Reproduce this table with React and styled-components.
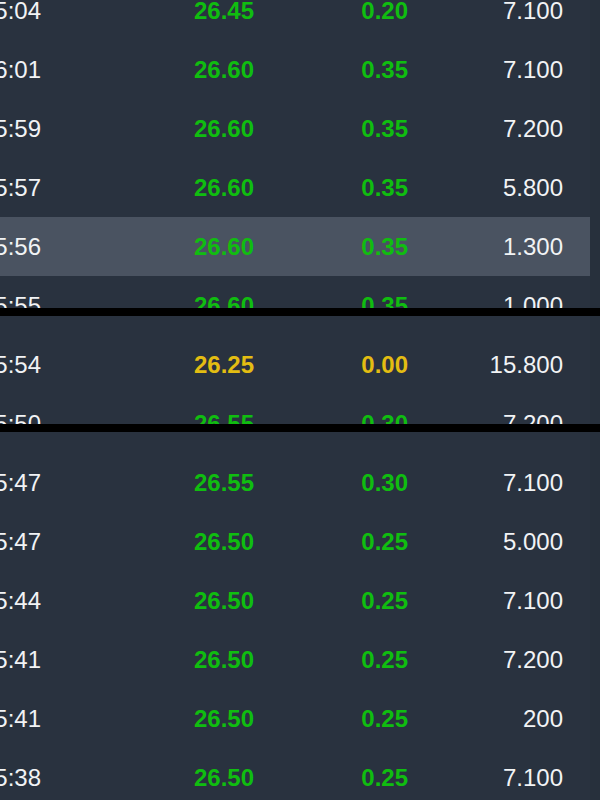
import styled, { createGlobalStyle } from "styled-components";

const GlobalStyle = createGlobalStyle`
  html, body {
    margin: 0;
    padding: 0;
    background: #000;
    overflow: hidden;
  }
  body {
    font-family: "Liberation Sans", Arial, sans-serif;
  }
`;

const Page = styled.div`
  width: 600px;
  height: 800px;
  display: flex;
  flex-direction: column;
  gap: 8px;
  background: #000;
  overflow: hidden;
`;

const Viewport = styled.div`
  height: ${p => p.$height}px;
  flex: none;
  overflow: hidden;
  background: #27303c;
`;

const List = styled.div`
  margin-top: ${p => p.$offset}px;
  width: 590px;
`;

const Row = styled.div`
  height: 59px;
  display: grid;
  grid-template-columns: 41px 213px 154px 155px 1fr;
  align-items: center;
  background: ${p => (p.$active ? "#4a5361" : "#29323f")};
  font-size: 24px;
`;

const Cell = styled.div`
  display: flex;
  justify-content: flex-end;
  white-space: nowrap;
  color: ${p => p.$color || "#f1f3f5"};
  font-weight: ${p => (p.$bold ? 700 : 400)};
`;

const colors = {
  up: "#10bd10",
  flat: "#e3bd12",
};

const segments = [
  {
    height: 308,
    offset: -19,
    rows: [
      ["13:25:04", "26.45", "0.20", "7.100", "up"],
      ["13:26:01", "26.60", "0.35", "7.100", "up"],
      ["13:25:59", "26.60", "0.35", "7.200", "up"],
      ["13:25:57", "26.60", "0.35", "5.800", "up"],
      ["13:25:56", "26.60", "0.35", "1.300", "up", true],
      ["13:25:55", "26.60", "0.35", "1.000", "up"],
    ],
  },
  {
    height: 108,
    offset: -40,
    rows: [
      ["13:25:55", "26.60", "0.35", "1.000", "up"],
      ["13:25:54", "26.25", "0.00", "15.800", "flat"],
      ["13:25:50", "26.55", "0.30", "7.200", "up"],
    ],
  },
  {
    height: 368,
    offset: -38,
    rows: [
      ["13:25:50", "26.55", "0.30", "7.200", "up"],
      ["13:25:47", "26.55", "0.30", "7.100", "up"],
      ["13:25:47", "26.50", "0.25", "5.000", "up"],
      ["13:25:44", "26.50", "0.25", "7.100", "up"],
      ["13:25:41", "26.50", "0.25", "7.200", "up"],
      ["13:25:41", "26.50", "0.25", "200", "up"],
      ["13:25:38", "26.50", "0.25", "7.100", "up"],
    ],
  },
];

const TradeRow = ({ time, price, change, volume, trend, active }) => (
  <Row $active={active}>
    <Cell>{time}</Cell>
    <Cell $bold $color={colors[trend]}>{price}</Cell>
    <Cell $bold $color={colors[trend]}>{change}</Cell>
    <Cell>{volume}</Cell>
    <span />
  </Row>
);

const App = () => (
  <>
    <GlobalStyle />
    <Page>
      {segments.map((seg, i) => (
        <Viewport key={i} $height={seg.height}>
          <List $offset={seg.offset}>
            {seg.rows.map(([time, price, change, volume, trend, active], j) => (
              <TradeRow
                key={j}
                time={time}
                price={price}
                change={change}
                volume={volume}
                trend={trend}
                active={active}
              />
            ))}
          </List>
        </Viewport>
      ))}
    </Page>
  </>
);

export default App;
